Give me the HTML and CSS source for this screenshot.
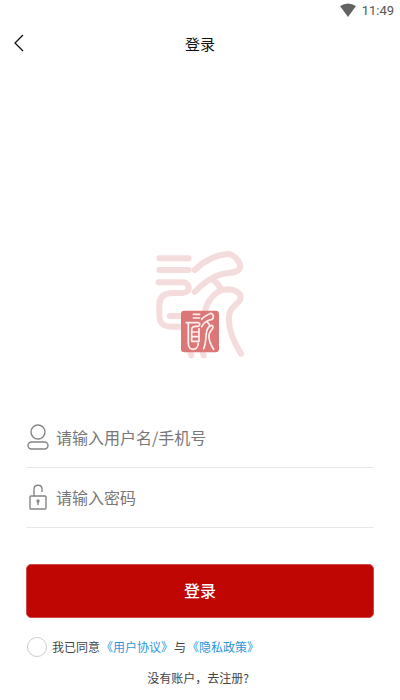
FILE: index.html
```html
<!DOCTYPE html>
<html lang="zh-CN">
<head>
    <meta charset="UTF-8">
    <meta name="viewport" content="width=device-width, initial-scale=1">
    <title>登录</title>
    <link rel="stylesheet" href="styles.css">
</head>
<body>
    <div class="status-bar">
        <svg width="16" height="14" viewBox="0 0 16 14" aria-hidden="true">
            <path d="M0 3Q8-2 16 3L8 14Z" fill="#626262"/>
        </svg>
        <span>11:49</span>
    </div>

    <header class="nav">
        <button class="back" type="button" aria-label="返回">
            <svg width="10" height="18" viewBox="0 0 10 18"><path d="M9 1L1 9l8 8"/></svg>
        </button>
        <h1>登录</h1>
    </header>

    <main>
        <!-- Logo -->
        <svg class="logo" width="110" height="125" viewBox="0 0 330 375" role="img" aria-label="logo">
            <g class="logo-back">
                <path d="M43 55H131M43 90H131M41 127H112C138 127 138 159 112 159H84C56 159 43 172 43 196V226C43 252 56 260 82 260H112M74 228H112"/>
                <path d="M149 90C180 60 214 44 252 41C268 48 284 62 286 80C284 100 250 98 232 102C204 108 176 128 149 156M200 118C216 124 222 140 230 148M180 212C192 170 220 148 248 148C270 149 288 158 287 174C284 192 258 196 253 222C247 260 262 300 288 341M134 328L139 346M170 328L176 346"/>
            </g>
            <rect x="108" y="212" width="114" height="125" rx="10" fill="#dc7777"/>
            <g class="logo-front">
                <path d="M145 223H164M145 234H164M124 248H160C166 249 166 258 158 259H150C140 260 140 266 140 274V304H162V266M142 276H162M142 290H162M130 250V310C130 334 158 334 160 310"/>
                <path d="M170 238C178 228 188 224 198 220C210 226 206 240 194 240C184 242 176 250 170 260M186 244L194 256M176 326C188 300 176 262 200 256C212 262 194 272 192 284C190 302 198 316 206 328"/>
            </g>
        </svg>

        <form class="login-form">
            <div class="field">
                <svg width="22" height="26" viewBox="0 0 22 26" aria-hidden="true">
                    <ellipse cx="11" cy="8" rx="7" ry="7"/>
                    <rect x="1" y="18" width="20" height="7" rx="3.5"/>
                </svg>
                <input type="text" name="username" placeholder="请输入用户名/手机号" aria-label="用户名/手机号">
            </div>
            <div class="field">
                <svg width="22" height="26" viewBox="0 0 22 26" aria-hidden="true">
                    <rect x="3" y="12" width="16" height="13" rx="1"/>
                    <path d="M7 12V5C7 0 15 0 15 5V8M11 18V21"/>
                    <circle cx="11" cy="17" r="1"/>
                </svg>
                <input type="password" name="password" placeholder="请输入密码" aria-label="密码">
            </div>
            <button class="submit" type="submit">登录</button>
            <div class="agreement">
                <input type="checkbox" id="agree">
                <span><label for="agree">我已同意</label><a href="#">《用户协议》</a>与<a href="#">《隐私政策》</a></span>
            </div>
        </form>
        <a class="register" href="#">没有账户，去注册?</a>
    </main>
</body>
</html>
```
FILE: styles.css
```css
* {
    box-sizing: border-box;
    margin: 0;
    padding: 0;
}

body {
    background: #fff;
    color: #111;
    font-family: "Noto Sans CJK SC", sans-serif;
    min-height: 100vh;
}

svg {
    display: block;
    flex: none;
}

button {
    border: none;
    background: none;
    font-family: inherit;
    cursor: pointer;
}

a {
    text-decoration: none;
}

.status-bar {
    display: flex;
    justify-content: flex-end;
    align-items: center;
    gap: 6px;
    height: 20px;
    padding-right: 6px;
    color: #555;
    font-family: Roboto, sans-serif;
    font-size: 13px;
}

.nav {
    display: grid;
    grid-template-columns: 48px 1fr 48px;
    align-items: center;
    height: 46px;
}

.nav h1 {
    font-size: 15px;
    font-weight: 400;
    text-align: center;
}

.back {
    padding: 12px 14px;
}

.back path {
    fill: none;
    stroke: #111;
    stroke-width: 1.3;
}

main {
    display: flex;
    flex-direction: column;
    align-items: center;
    padding: 174px 26px 0;
}

.logo path {
    fill: none;
    stroke-linecap: round;
    stroke-linejoin: round;
}

.logo-back {
    stroke: #f5dcdc;
    stroke-width: 18;
}

.logo-front {
    stroke: #fff1f1;
    stroke-width: 5;
}

.login-form {
    width: 100%;
    margin-top: 43px;
}

.field {
    display: flex;
    align-items: center;
    gap: 7px;
    height: 60px;
    padding: 0 0 1px 1px;
    border-bottom: 1px solid #e8e8e8;
}

.field svg {
    fill: none;
    stroke: #858585;
    stroke-width: 1.4;
}

.field input {
    flex: 1;
    min-width: 0;
    border: none;
    outline: none;
    background: none;
    color: #333;
    font-family: inherit;
    font-size: 16px;
    line-height: 24px;
}

.field input::placeholder {
    color: #777;
    opacity: 1;
}

.submit {
    display: block;
    width: 100%;
    height: 54px;
    margin-top: 36px;
    padding-bottom: 2px;
    border: 1px solid #cf4a4a;
    border-radius: 5px;
    background: #bf0603;
    color: #fff;
    font-size: 16px;
    font-weight: 500;
}

.agreement {
    display: flex;
    align-items: center;
    gap: 5px;
    margin-top: 17px;
    padding-left: 1px;
    color: #444;
    font-size: 12px;
    line-height: 24px;
}

.agreement input {
    appearance: none;
    width: 20px;
    height: 20px;
    border: 1px solid #ccc;
    border-radius: 50%;
}

.agreement input:checked {
    background: #bf0603;
}

.agreement a {
    margin: 0 1px;
    color: #2b96d8;
}

.register {
    margin-top: 9px;
    padding-right: 4px;
    color: #444;
    font-size: 12px;
    line-height: 20px;
}
```
